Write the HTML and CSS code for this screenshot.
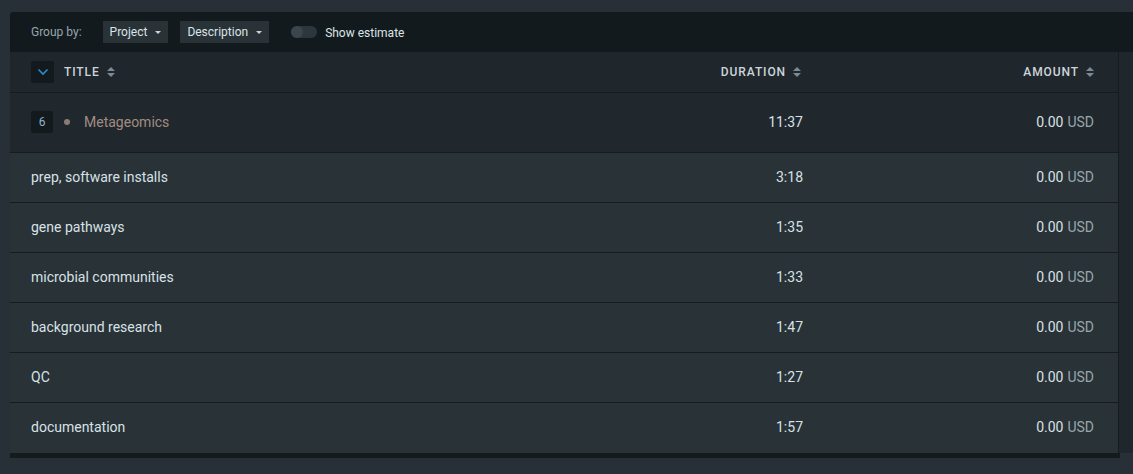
FILE: index.html
```html
<!DOCTYPE html>
<html>
<head>
<meta charset="utf-8">
<link rel="stylesheet" href="styles.css">
</head>
<body>
<div class="card">
  <div class="toolbar">
    <span class="group-label">Group by:</span>
    <span class="dropdown">Project <span class="caret"></span></span>
    <span class="dropdown">Description <span class="caret"></span></span>
    <span class="toggle"><span class="knob"></span></span>
    <span class="toggle-label">Show estimate</span>
  </div>
  <div class="body">
    <div class="table">
      <div class="row head">
        <div class="c-title">
          <span class="chev"><svg width="12" height="8" viewBox="0 0 12 8"><path d="M1.5 1.5 L6 6 L10.5 1.5" fill="none" stroke="#2b8ad0" stroke-width="1.6"/></svg></span>
          <span class="hlabel">Title</span><span class="sort"></span>
        </div>
        <div class="c-dur"><span class="hlabel">Duration</span><span class="sort sort-dur"></span></div>
        <div class="c-amt"><span class="hlabel">Amount</span><span class="sort"></span></div>
      </div>
      <div class="row group">
        <div class="c-title"><span class="badge">6</span><span class="dot"></span><span class="proj">Metageomics</span></div>
        <div class="c-dur">11:37</div>
        <div class="c-amt">0.00 <span class="cur">USD</span></div>
      </div>
      <div class="row item"><div class="c-title">prep, software installs</div><div class="c-dur">3:18</div><div class="c-amt">0.00 <span class="cur">USD</span></div></div>
      <div class="row item"><div class="c-title">gene pathways</div><div class="c-dur">1:35</div><div class="c-amt">0.00 <span class="cur">USD</span></div></div>
      <div class="row item"><div class="c-title">microbial communities</div><div class="c-dur">1:33</div><div class="c-amt">0.00 <span class="cur">USD</span></div></div>
      <div class="row item"><div class="c-title">background research</div><div class="c-dur">1:47</div><div class="c-amt">0.00 <span class="cur">USD</span></div></div>
      <div class="row item"><div class="c-title">QC</div><div class="c-dur">1:27</div><div class="c-amt">0.00 <span class="cur">USD</span></div></div>
      <div class="row item last"><div class="c-title">documentation</div><div class="c-dur">1:57</div><div class="c-amt">0.00 <span class="cur">USD</span></div></div>
    </div>
    <div class="side"></div>
  </div>
  <div class="foot"></div>
</div>
</body>
</html>
```
FILE: styles.css
```css
* { box-sizing: border-box; }
html, body { margin: 0; padding: 0; }
body {
  background: #263036;
  font-family: Roboto, "Liberation Sans", sans-serif;
  font-size: 14px;
  color: #d9e1e6;
  padding: 12px 0 0 10px;
  height: 474px;
  overflow: hidden;
}
.card {
  width: 1123px;
  border-top-left-radius: 3px;
  overflow: hidden;
}
.toolbar {
  height: 40px;
  background: #131a1e;
  display: flex;
  align-items: center;
  padding-left: 21px;
  font-size: 12px;
}
.group-label { color: #97a4ac; margin-right: 21px; }
.dropdown {
  background: #283237;
  color: #dbe3e8;
  height: 22px;
  display: flex;
  align-items: center;
  padding: 0 7px;
  margin-right: 12px;
}
.caret {
  display: inline-block;
  width: 0; height: 0;
  border-left: 3px solid transparent;
  border-right: 3px solid transparent;
  border-top: 3px solid #c9d2d8;
  margin-left: 8px;
}
.toggle {
  width: 26px; height: 12px;
  border-radius: 6px;
  background: #2c373d;
  margin-left: 10px;
  margin-right: 8px;
  position: relative;
}
.knob {
  position: absolute; left: 0; top: 0;
  width: 12px; height: 12px; border-radius: 50%;
  background: #3a464d;
}
.toggle-label { color: #dbe3e8; margin-top: 1px; }
.body { display: flex; }
.table { width: 1109px; border-right: 1px solid #151c20; }
.side { flex: 1; background: #1f272c; }
.row {
  display: flex;
  align-items: center;
  padding-left: 21px;
  border-bottom: 1px solid #151c20;
}
.row.last { border-bottom: none; }
.head { height: 41px; background: #1f272c; }
.group { height: 60px; background: #20282d; padding-bottom: 1px; }
.item { height: 50px; background: #283237; padding-bottom: 2px; }
.row.last { padding-bottom: 3px; }
.c-title { flex: 1; display: flex; align-items: center; }
.c-dur { width: 200px; display: flex; justify-content: flex-end; align-items: center; }
.c-amt { width: 291px; display: flex; justify-content: flex-end; align-items: center; margin-right: 24px; }
.cur { color: #98a6ae; margin-left: 4px; }
.chev {
  width: 23px; height: 22px;
  background: #131a1e;
  border-radius: 2px;
  display: flex; align-items: center; justify-content: center;
  margin-right: 10px;
}
.hlabel {
  font-size: 12px;
  font-weight: 500;
  text-transform: uppercase;
  letter-spacing: 0.9px;
  color: #ccd5db;
}
.sort {
  display: inline-block;
  width: 8px; height: 10px;
  margin-left: 7px;
  position: relative;
}
.sort-dur { margin-right: 2px; }
.sort::before, .sort::after {
  content: "";
  position: absolute; left: 0;
  border-left: 4px solid transparent;
  border-right: 4px solid transparent;
}
.sort::before { top: 0; border-bottom: 4px solid #7b8a93; }
.sort::after { bottom: 0; border-top: 4px solid #7b8a93; }
.badge {
  width: 22px; height: 22px;
  background: #131a1e;
  color: #8db3cf;
  font-size: 12px;
  display: flex; align-items: center; justify-content: center;
  border-radius: 2px;
}
.dot {
  width: 6px; height: 6px; border-radius: 50%;
  background: #8a7b76;
  margin-left: 11px; margin-right: 14px;
}
.proj { color: #a28c82; }
.foot { height: 5px; background: #141b1f; width: 1110px; }
```
